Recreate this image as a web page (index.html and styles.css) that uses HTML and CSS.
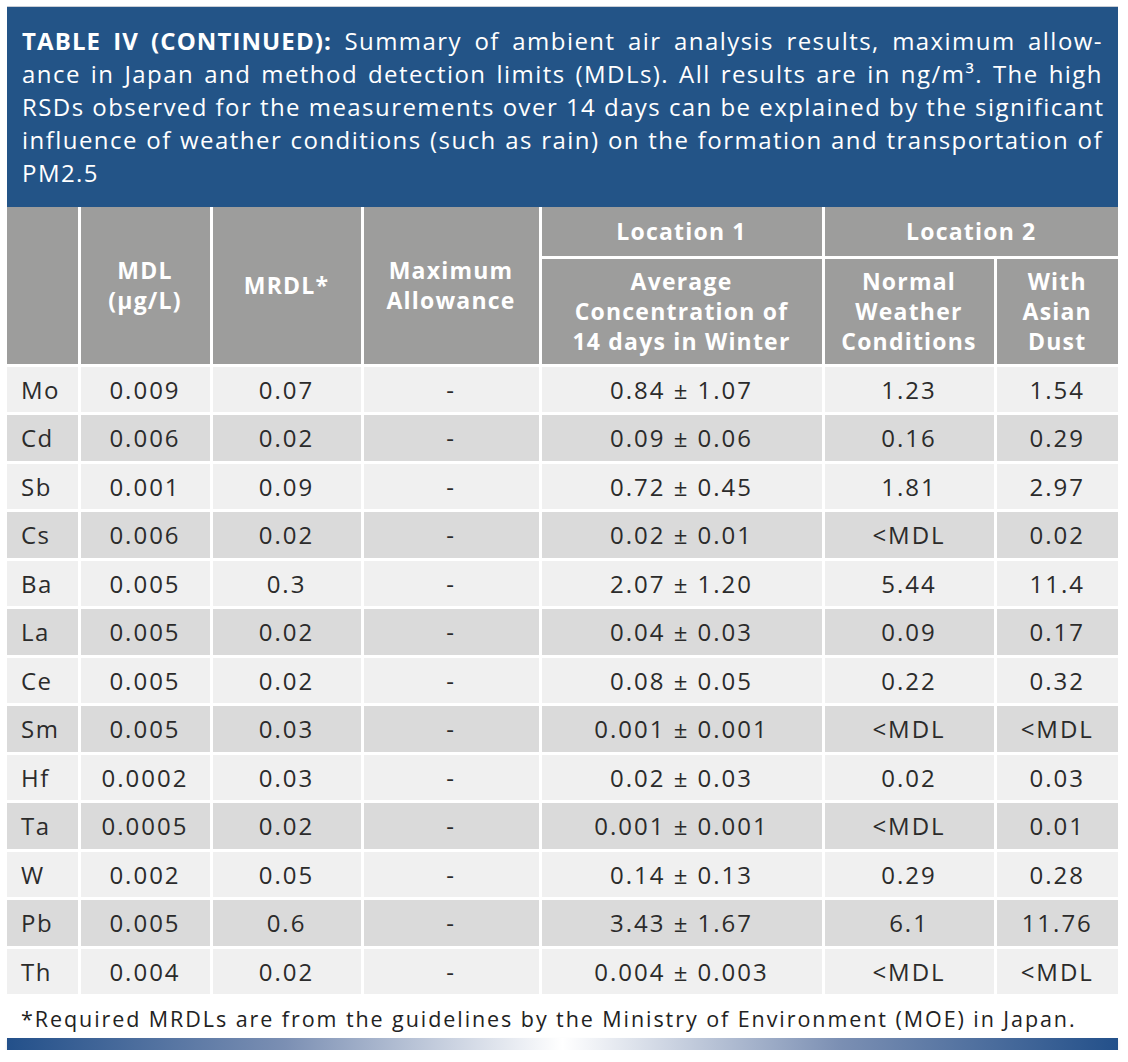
FILE: index.html
```html
<!DOCTYPE html>
<html>
<head>
<meta charset="utf-8">
<link rel="stylesheet" href="styles.css">
</head>
<body>
<div class="wrap">
  <div class="caption">
    <span class="cap-line"><b>TABLE IV (CONTINUED):</b> Summary of ambient air analysis results, maximum allow-</span>
    <span class="cap-line">ance in Japan and method detection limits (MDLs). All results are in ng/m³. The high</span>
    <span class="cap-line">RSDs observed for the measurements over 14 days can be explained by the significant</span>
    <span class="cap-line">influence of weather conditions (such as rain) on the formation and transportation of</span>
    <span class="cap-line last">PM2.5</span>
  </div>
  <table class="data">
    <colgroup>
      <col class="c1"><col class="c2"><col class="c3"><col class="c4"><col class="c5"><col class="c6"><col class="c7">
    </colgroup>
    <thead>
      <tr class="h1">
        <th rowspan="2" class="first"></th>
        <th rowspan="2">MDL<br>(µg/L)</th>
        <th rowspan="2">MRDL*</th>
        <th rowspan="2">Maximum<br>Allowance</th>
        <th>Location 1</th>
        <th colspan="2">Location 2</th>
      </tr>
      <tr class="h2">
        <th>Average<br>Concentration of<br>14 days in Winter</th>
        <th>Normal<br>Weather<br>Conditions</th>
        <th>With<br>Asian<br>Dust</th>
      </tr>
    </thead>
    <tbody>
      <tr><td class="first">Mo</td><td>0.009</td><td>0.07</td><td>-</td><td>0.84 ± 1.07</td><td>1.23</td><td>1.54</td></tr>
      <tr><td class="first">Cd</td><td>0.006</td><td>0.02</td><td>-</td><td>0.09 ± 0.06</td><td>0.16</td><td>0.29</td></tr>
      <tr><td class="first">Sb</td><td>0.001</td><td>0.09</td><td>-</td><td>0.72 ± 0.45</td><td>1.81</td><td>2.97</td></tr>
      <tr><td class="first">Cs</td><td>0.006</td><td>0.02</td><td>-</td><td>0.02 ± 0.01</td><td>&lt;MDL</td><td>0.02</td></tr>
      <tr><td class="first">Ba</td><td>0.005</td><td>0.3</td><td>-</td><td>2.07 ± 1.20</td><td>5.44</td><td>11.4</td></tr>
      <tr><td class="first">La</td><td>0.005</td><td>0.02</td><td>-</td><td>0.04 ± 0.03</td><td>0.09</td><td>0.17</td></tr>
      <tr><td class="first">Ce</td><td>0.005</td><td>0.02</td><td>-</td><td>0.08 ± 0.05</td><td>0.22</td><td>0.32</td></tr>
      <tr><td class="first">Sm</td><td>0.005</td><td>0.03</td><td>-</td><td>0.001 ± 0.001</td><td>&lt;MDL</td><td>&lt;MDL</td></tr>
      <tr><td class="first">Hf</td><td>0.0002</td><td>0.03</td><td>-</td><td>0.02 ± 0.03</td><td>0.02</td><td>0.03</td></tr>
      <tr><td class="first">Ta</td><td>0.0005</td><td>0.02</td><td>-</td><td>0.001 ± 0.001</td><td>&lt;MDL</td><td>0.01</td></tr>
      <tr><td class="first">W</td><td>0.002</td><td>0.05</td><td>-</td><td>0.14 ± 0.13</td><td>0.29</td><td>0.28</td></tr>
      <tr><td class="first">Pb</td><td>0.005</td><td>0.6</td><td>-</td><td>3.43 ± 1.67</td><td>6.1</td><td>11.76</td></tr>
      <tr><td class="first">Th</td><td>0.004</td><td>0.02</td><td>-</td><td>0.004 ± 0.003</td><td>&lt;MDL</td><td>&lt;MDL</td></tr>
    </tbody>
  </table>
  <p class="note">*Required MRDLs are from the guidelines by the Ministry of Environment (MOE) in Japan.</p>
  <div class="rule"></div>
</div>
</body>
</html>
```

FILE: styles.css
```css
html, body {
  margin: 0;
  padding: 0;
  background: #ffffff;
}
body {
  font-family: "Open Sans", "Noto Sans", sans-serif;
  color: #2b2b2b;
}
.wrap {
  width: 1111px;
  margin: 6px 0 0 7px;
}
.caption {
  background: #235487;
  color: #ffffff;
  font-size: 24px;
  line-height: 33px;
  letter-spacing: 1.45px;
  padding: 17px 15px 18px 15px;
  border-top: 1px solid #c9ced6;
  box-sizing: border-box;
  height: 201px;
}
.cap-line {
  display: block;
  white-space: nowrap;
  text-align: justify;
  text-align-last: justify;
}
.cap-line.last {
  text-align: left;
  text-align-last: left;
}
.cap-line b {
  font-weight: 700;
  letter-spacing: 1.1px;
}
.data {
  width: 1111px;
  border-collapse: collapse;
  table-layout: fixed;
  text-align: center;
}
.c1 { width: 72px; }
.c2 { width: 132px; }
.c3 { width: 151px; }
.c4 { width: 178px; }
.c5 { width: 283px; }
.c6 { width: 172px; }
.c7 { width: 123px; }
.data th {
  background: #9d9d9c;
  color: #ffffff;
  font-weight: 700;
  font-size: 23px;
  line-height: 30px;
  letter-spacing: 1.2px;
  padding: 0;
  border-left: 3px solid #ffffff;
  border-top: 3px solid #ffffff;
}
.data thead tr.h1 th {
  border-top: 0;
}
.data tr.h1 { height: 50px; }
.data tr.h2 { height: 108px; }
.data th.first,
.data td.first {
  border-left: 0;
}
.data td {
  font-size: 24px;
  letter-spacing: 2px;
  padding: 0;
  height: 45.5px;
  border-left: 3px solid #ffffff;
  border-top: 3px solid #ffffff;
  color: #2b2b2b;
}
.data td.first {
  text-align: left;
  padding-left: 14px;
  letter-spacing: 1.5px;
}
.data tbody tr:nth-child(odd) td { background: #f0f0f0; }
.data tbody tr:nth-child(even) td { background: #dadada; }
.note {
  margin: 0;
  padding: 12px 0 0 14px;
  font-size: 21.5px;
  line-height: 26px;
  letter-spacing: 1.93px;
  white-space: nowrap;
  color: #222;
}
.rule {
  margin-top: 6px;
  height: 12px;
  background: linear-gradient(to right, #23508a 0%, #7b8fb3 25%, #ffffff 50%, #7b8fb3 75%, #23508a 100%);
  box-shadow: 0 2px 3px rgba(0,0,0,0.12);
}
```
